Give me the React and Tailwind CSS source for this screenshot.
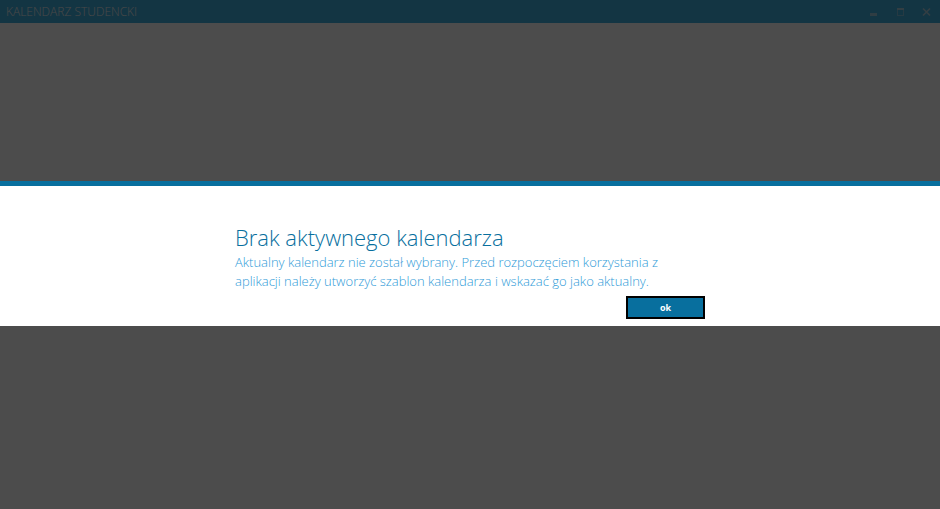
function TitleBar() {
  return (
    <header className="flex h-[23px] items-center justify-between bg-[#41b1e1] pr-2 pl-[6px]">
      <h1 className="text-[12px] leading-4 font-light text-[#f0f0f0]">KALENDARZ STUDENCKI</h1>
      <div className="flex items-center gap-[15px] text-[#a8cfe2]">
        <button type="button" aria-label="Minimalizuj" className="h-[11px] w-[11px]">
          <svg viewBox="0 0 11 11" className="block h-full w-full" fill="currentColor" shapeRendering="crispEdges">
            <path d="M1 7h7v3H1z" opacity="0.9" />
          </svg>
        </button>
        <button type="button" aria-label="Maksymalizuj" className="h-[11px] w-[11px]">
          <svg viewBox="0 0 11 11" className="block h-full w-full" fill="currentColor" shapeRendering="crispEdges">
            <path d="M2 2h7v2H2z" />
            <path fillRule="evenodd" d="M2 4h7v6H2zM3 4v5h5V4z" opacity="0.6" />
          </svg>
        </button>
        <button type="button" aria-label="Zamknij" className="h-[11px] w-[11px]">
          <svg viewBox="0 0 11 11" className="block h-full w-full" fill="none" stroke="currentColor" strokeWidth="1.7">
            <path d="M2 2.5l7 7M9 2.5l-7 7" />
          </svg>
        </button>
      </div>
    </header>
  );
}

function MessageDialog() {
  return (
    <div className="fixed inset-0 flex items-center bg-black/70 pb-0.5">
      <section
        role="alertdialog"
        aria-labelledby="dialog-title"
        aria-describedby="dialog-text"
        className="w-full border-t-5 border-[#086f9e] bg-white pt-9 pb-[7px]"
      >
        <div className="mx-auto w-1/2">
          <h2 id="dialog-title" className="text-[22px] leading-[31px] font-light text-[#086f9e]">
            Brak aktywnego kalendarza
          </h2>
          <p id="dialog-text" className="text-[13px] leading-[19px] font-light text-[#2f9bd8]">
            Aktualny kalendarz nie został wybrany. Przed rozpoczęciem korzystania z aplikacji należy utworzyć szablon
            kalendarza i wskazać go jako aktualny.
          </p>
          <div className="mt-[5px] flex justify-end">
            <button
              type="button"
              className="h-[23px] w-[79px] border-2 border-black bg-[#086f9e] text-[9px] leading-none font-bold text-white"
            >
              ok
            </button>
          </div>
        </div>
      </section>
    </div>
  );
}

export default function App() {
  return (
    <div className="min-h-screen bg-white font-['Open_Sans','Noto_Sans',sans-serif]">
      <TitleBar />
      <MessageDialog />
    </div>
  );
}
